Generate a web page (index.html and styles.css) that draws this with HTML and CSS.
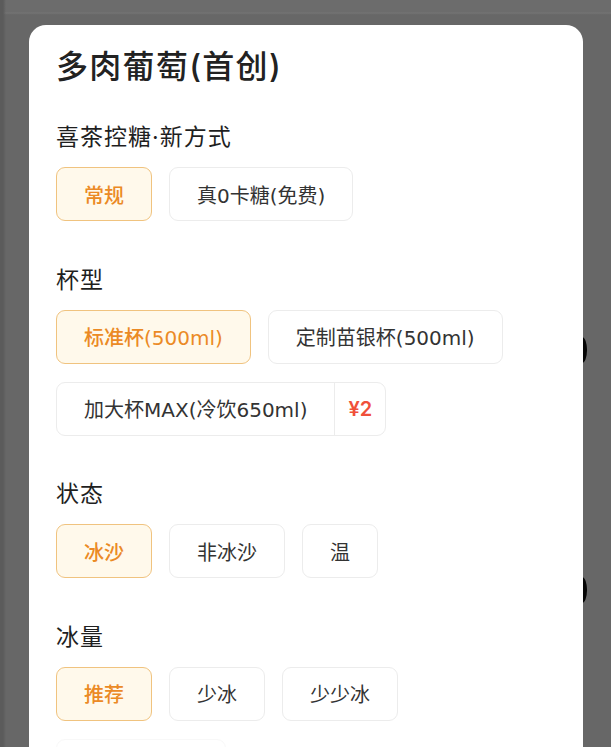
FILE: index.html
```html
<!DOCTYPE html>
<html lang="zh-CN">
<head>
<meta charset="utf-8">
<title>多肉葡萄(首创)</title>
<link rel="stylesheet" href="styles.css">
</head>
<body>
<div class="backdrop">
  <span class="peek peek-top"></span>
  <span class="peek peek-bottom"></span>
</div>
<div class="sheet">
  <h1 class="title">多肉葡萄(首创)</h1>

  <section class="group">
    <h2 class="label">喜茶控糖·新方式</h2>
    <div class="options">
      <div class="opt selected">常规</div>
      <div class="opt">真0卡糖(免费)</div>
    </div>
  </section>

  <section class="group">
    <h2 class="label">杯型</h2>
    <div class="options">
      <div class="opt selected">标准杯(500ml)</div>
      <div class="opt">定制苗银杯(500ml)</div>
      <div class="opt priced">
        <span class="opt-name">加大杯MAX(冷饮650ml)</span>
        <span class="opt-price">¥2</span>
      </div>
    </div>
  </section>

  <section class="group">
    <h2 class="label">状态</h2>
    <div class="options">
      <div class="opt selected">冰沙</div>
      <div class="opt">非冰沙</div>
      <div class="opt">温</div>
    </div>
  </section>

  <section class="group">
    <h2 class="label">冰量</h2>
    <div class="options">
      <div class="opt selected">推荐</div>
      <div class="opt">少冰</div>
      <div class="opt">少少冰</div>
      <div class="opt faint"></div>
    </div>
  </section>
</div>
</body>
</html>
```

FILE: styles.css
```css
html, body {
  margin: 0;
  height: 100%;
  overflow: hidden;
}

body {
  position: relative;
  background-color: #676767;
  background-image:
    linear-gradient(to right, #5b5b5b 0, #5b5b5b 3px, rgba(103,103,103,0) 6px),
    linear-gradient(to bottom, #6c6c6c 0, #6c6c6c 12px, #757575 13px, #6a6a6a 14px, rgba(103,103,103,0) 15px);
  font-family: "Inter", "Noto Sans CJK SC", sans-serif;
  color: #333;
}

.backdrop {
  position: absolute;
  inset: 0;
  z-index: 0;
}

.peek {
  position: absolute;
  left: 560px;
  width: 27px;
  height: 26px;
  background: #050505;
  border-radius: 0 5px 5px 0 / 0 13px 13px 0;
}

.peek-top { top: 337px; }
.peek-bottom { top: 577px; }

.sheet {
  position: relative;
  z-index: 1;
  margin: 25px 28px 0 29px;
  padding: 22px 27px 0;
  min-height: 800px;
  background: #fff;
  border-radius: 17px 17px 0 0;
}

.title {
  margin: 0 0 35px;
  font-size: 32px;
  line-height: 40px;
  font-weight: 500;
  letter-spacing: 1.3px;
  color: #222;
}

.group + .group {
  margin-top: 43.5px;
}

.label {
  margin: 0 0 15px;
  font-size: 23px;
  line-height: 30px;
  font-weight: 400;
  letter-spacing: 1px;
  color: #1f1f1f;
}

.options {
  display: flex;
  flex-wrap: wrap;
  gap: 18px 17px;
}

.opt {
  box-sizing: border-box;
  height: 54px;
  display: flex;
  align-items: center;
  padding: 0 27px;
  border: 1px solid #ececec;
  border-radius: 9px;
  background: #fff;
  font-family: "DejaVu Sans", "Noto Sans CJK SC", sans-serif;
  font-size: 20px;
  color: #333;
  white-space: nowrap;
}

.opt.selected {
  border-color: #f0c37f;
  background: #fff9eb;
  color: #eb8a25;
  font-weight: 500;
}

.opt.priced {
  padding: 0;
}

.opt-name {
  display: flex;
  align-items: center;
  height: 100%;
  padding: 0 27px;
  border-right: 1px solid #ececec;
}

.opt-price {
  padding: 0 13px;
  font-family: "Inter", "Noto Sans CJK SC", sans-serif;
  color: #f0503a;
  font-weight: 600;
}

.opt.faint {
  width: 170px;
  opacity: 0.35;
}
```
